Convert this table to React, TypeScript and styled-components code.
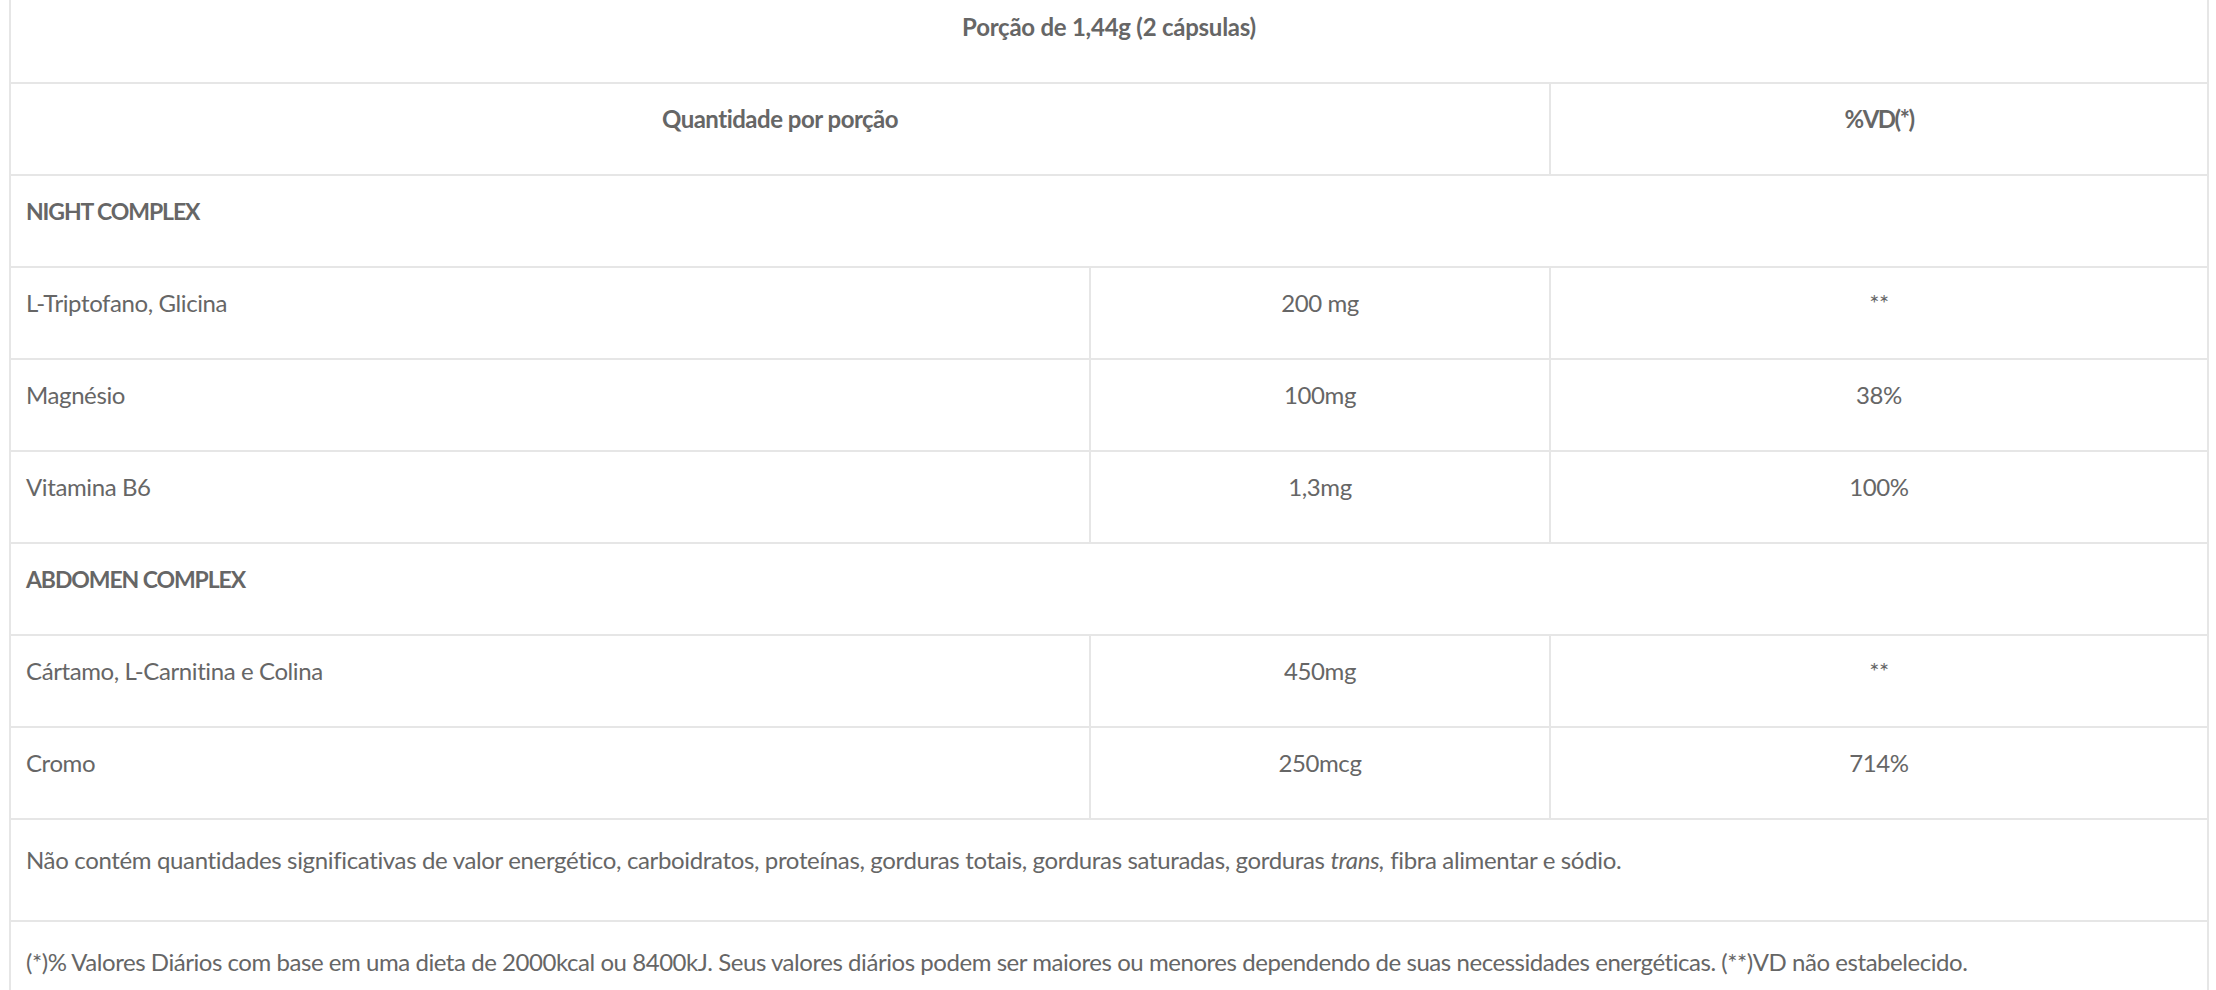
import React from 'react';
import styled, { createGlobalStyle } from 'styled-components';

const GlobalStyle = createGlobalStyle`
  html, body {
    margin: 0;
    padding: 0;
    background: #fff;
    overflow: hidden;
  }
  body {
    font-family: Lato, "Open Sans", sans-serif;
    color: #666;
  }
`;

const Page = styled.div`
  padding: 0 0 0 9px;
  margin-top: -10px;
`;

const Table = styled.table`
  width: 2200px;
  border-collapse: collapse;
  table-layout: fixed;
  font-family: Lato, "Open Sans", sans-serif;
  font-size: 24px;
  line-height: 36px;
  color: #666;
`;

const Cell = styled.td<{
  $align?: 'left' | 'center';
  $bold?: boolean;
  $note?: boolean;
  $spacing?: number;
  $size?: number;
}>`
  border: 2px solid #e6e6e6;
  padding: ${(p) => (p.$note ? '22px 15px 42px 15px' : '17px 15px 37px 15px')};
  text-align: ${(p) => p.$align || 'left'};
  font-weight: ${(p) => (p.$bold ? 700 : 400)};
  font-size: ${(p) => p.$size ?? 24}px;
  letter-spacing: ${(p) => p.$spacing ?? -0.4}px;
  vertical-align: top;
  white-space: nowrap;
`;

const Italic = styled.em`
  font-style: italic;
`;

type Item = { name: string; amount: string; vd: string };

const sections: { title: string; items: Item[] }[] = [
  {
    title: 'NIGHT COMPLEX',
    items: [
      { name: 'L-Triptofano, Glicina', amount: '200 mg', vd: '**' },
      { name: 'Magnésio', amount: '100mg', vd: '38%' },
      { name: 'Vitamina B6', amount: '1,3mg', vd: '100%' },
    ],
  },
  {
    title: 'ABDOMEN COMPLEX',
    items: [
      { name: 'Cártamo, L-Carnitina e Colina', amount: '450mg', vd: '**' },
      { name: 'Cromo', amount: '250mcg', vd: '714%' },
    ],
  },
];

export default function App() {
  return (
    <>
      <GlobalStyle />
      <Page>
        <Table>
          <colgroup>
            <col style={{ width: 1080 }} />
            <col style={{ width: 460 }} />
            <col style={{ width: 658 }} />
          </colgroup>
          <tbody>
            <tr>
              <Cell colSpan={3} $align="center" $bold $spacing={-0.25}>
                Porção de 1,44g (2 cápsulas)
              </Cell>
            </tr>
            <tr>
              <Cell colSpan={2} $align="center" $bold $spacing={-0.5}>
                Quantidade por porção
              </Cell>
              <Cell $align="center" $bold $spacing={-1.5}>
                %VD(*)
              </Cell>
            </tr>
            {sections.map((s) => (
              <React.Fragment key={s.title}>
                <tr>
                  <Cell colSpan={3} $bold $size={23} $spacing={-1.1}>
                    {s.title}
                  </Cell>
                </tr>
                {s.items.map((it) => (
                  <tr key={it.name}>
                    <Cell>{it.name}</Cell>
                    <Cell $align="center">{it.amount}</Cell>
                    <Cell $align="center">{it.vd}</Cell>
                  </tr>
                ))}
              </React.Fragment>
            ))}
            <tr>
              <Cell colSpan={3} $note $spacing={-0.35}>
                Não contém quantidades significativas de valor energético, carboidratos, proteínas, gorduras
                totais, gorduras saturadas, gorduras <Italic>trans,</Italic> fibra alimentar e sódio.
              </Cell>
            </tr>
            <tr>
              <Cell colSpan={3} $note $spacing={-0.45}>
                (*)% Valores Diários com base em uma dieta de 2000kcal ou 8400kJ. Seus valores diários podem
                ser maiores ou menores dependendo de suas necessidades energéticas. (**)VD não estabelecido.
              </Cell>
            </tr>
          </tbody>
        </Table>
      </Page>
    </>
  );
}
